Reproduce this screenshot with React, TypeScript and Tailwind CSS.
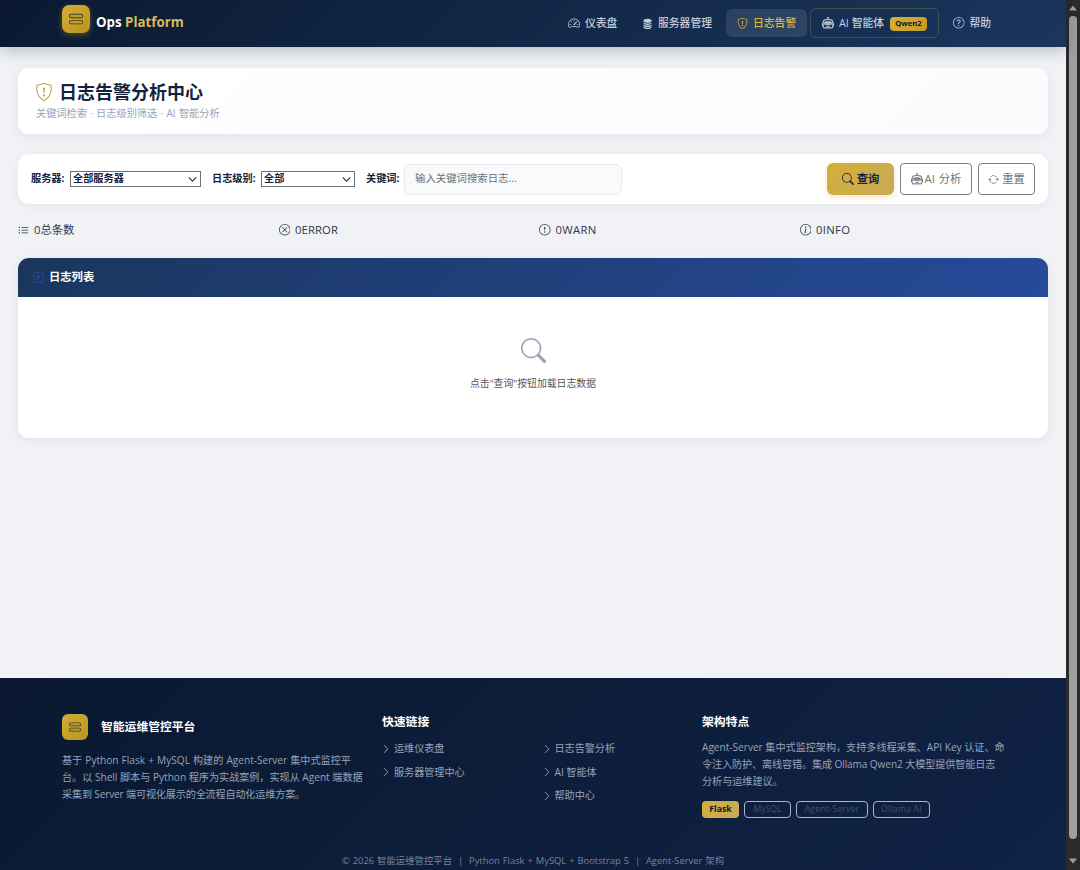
import React from "react";
import {
  BsHddStack,
  BsSpeedometer2,
  BsDatabaseFill,
  BsShieldExclamation,
  BsRobot,
  BsQuestionCircle,
  BsSearch,
  BsArrowRepeat,
  BsListUl,
  BsXCircle,
  BsExclamationCircle,
  BsInfoCircle,
  BsJournalText,
  BsChevronRight,
  BsChevronDown,
} from "react-icons/bs";

function Navbar() {
  return (
    <header className="relative z-10 flex h-[47px] shrink-0 items-start justify-between bg-[linear-gradient(135deg,#0a1931_0%,#1a365d_100%)] pl-[62px] pr-[63px] shadow-[0_3px_16px_rgba(10,25,49,0.28)]">
      <div className="flex items-start">
        <div className="mt-[5px] flex size-7 items-center justify-center rounded-[7px] bg-[linear-gradient(135deg,#d4af37,#b8941f)] shadow-[0_2px_6px_rgba(212,175,55,0.35)]">
          <BsHddStack className="size-[14px] text-[#0a1931]/75" />
        </div>
        <div className="ml-[6px] mt-[12px] whitespace-nowrap text-[13.3px] font-bold leading-[20px] text-white">
          Ops <span className="text-[#d6bb5c]">Platform</span>
        </div>
      </div>
      <nav className="flex h-[46px] items-center gap-[3px] text-[10.8px] font-medium text-[#c3cddd]">
        <a className="flex h-7 w-[71px] items-center gap-[5px] pl-[11px]">
          <BsSpeedometer2 className="size-3" />仪表盘
        </a>
        <a className="flex h-7 w-[92px] items-center gap-[5px] pl-[11px]">
          <BsDatabaseFill className="size-[11px]" />服务器管理
        </a>
        <a className="flex h-7 w-[81px] items-center gap-[5px] rounded-[6px] bg-white/10 pl-[11px] text-[#d8b63f]">
          <BsShieldExclamation className="size-[11px]" />日志告警
        </a>
        <a className="flex h-[30px] w-[129px] items-center rounded-[6px] border border-[#d4af37]/25 pl-[11px]">
          <BsRobot className="size-3 stroke-current stroke-[0.5]" />
          <span className="ml-[5px] w-[47px] whitespace-nowrap">AI 智能体</span>
          <span className="ml-[4px] mt-px flex h-[14px] w-[37px] items-center justify-center rounded-[4px] bg-[linear-gradient(135deg,#d9b035,#c19a23)] text-[7.6px] font-bold text-[#0a1931]">
            Qwen2
          </span>
        </a>
        <a className="flex h-7 w-[61px] items-center gap-[5px] pl-[11px]">
          <BsQuestionCircle className="size-[11.5px]" />帮助
        </a>
      </nav>
    </header>
  );
}

function SelectBox({ label, className }: { label: string; className: string }) {
  return (
    <div className={`flex h-4 items-center justify-between border border-[#6d7177] bg-white pl-[2px] pr-[3px] ${className}`}>
      <span>{label}</span>
      <BsChevronDown className="size-[9px] stroke-[#14233d] stroke-1" />
    </div>
  );
}

function FilterBar() {
  return (
    <section className="mt-5 flex h-[50px] items-center rounded-[11px] bg-white pl-[13px] pr-[13px] text-[10.2px] font-bold text-[#14233d] shadow-[0_2px_10px_rgba(10,25,49,0.05)]">
      <span className="w-[39px] whitespace-nowrap">服务器:</span>
      <SelectBox label="全部服务器" className="w-[131px]" />
      <span className="ml-[11px] w-[49px] whitespace-nowrap">日志级别:</span>
      <SelectBox label="全部" className="w-[94px]" />
      <span className="ml-[11px] w-[38px] whitespace-nowrap">关键词:</span>
      <div className="flex h-[31px] w-[218px] items-center rounded-[6px] border border-[#e6eaf0] bg-[#f8fafc] pl-[10px] text-[10.4px] font-normal text-[#6c7078]">
        输入关键词搜索日志...
      </div>
      <div className="mb-px ml-auto flex gap-[6px] text-[11.3px]">
        <button className="flex h-8 w-[67px] items-center justify-center gap-[3px] rounded-[6px] bg-[linear-gradient(135deg,#d4af37,#c9a959)] pt-px font-bold shadow-[0_2px_6px_rgba(212,175,55,0.3)]">
          <BsSearch className="size-[12px]" />查询
        </button>
        <button className="flex h-8 w-[72px] items-center justify-center gap-[2px] whitespace-nowrap rounded-[4px] border border-[#7a8088] pt-px font-normal text-[#6c757d] [word-spacing:1px]">
          <BsRobot className="size-[12px] stroke-current stroke-[0.3]" />AI 分析
        </button>
        <button className="flex h-8 w-[57px] items-center justify-center gap-[3px] rounded-[4px] border border-[#7a8088] pt-px font-normal text-[#6c757d]">
          <BsArrowRepeat className="size-[11px]" />重置
        </button>
      </div>
    </section>
  );
}

function Stats() {
  return (
    <section className="mt-[15px] flex h-[22px] items-center text-[11.3px] text-[#2d3748]">
      <div className="flex w-[260.5px] items-center gap-[5px]"><BsListUl className="size-[11px]" />0总条数</div>
      <div className="flex w-[260.5px] items-center gap-[5px] tracking-[0.1px]"><BsXCircle className="size-[11.5px]" />0ERROR</div>
      <div className="flex w-[260.5px] items-center gap-[5px] tracking-[0.3px]"><BsExclamationCircle className="size-[11.5px]" />0WARN</div>
      <div className="flex items-center gap-[5px] tracking-[0.3px]"><BsInfoCircle className="size-[11.5px]" />0INFO</div>
    </section>
  );
}

function LogPanel() {
  return (
    <section className="mt-[17px] flex h-[180px] flex-col overflow-hidden rounded-[11px] bg-white shadow-[0_2px_10px_rgba(10,25,49,0.07)]">
      <div className="flex h-[39px] items-center bg-[linear-gradient(135deg,#1a365d_0%,#264a9a_100%)] pl-[15px] text-[11.3px] font-bold text-white">
        <BsJournalText className="mr-[5px] size-[11px] text-[#2c5299]" />日志列表
      </div>
      <div className="flex flex-col items-center">
        <BsSearch className="mt-[41px] size-[25px] text-[#98a3b8]" />
        <p className="mt-[12px] text-[9.85px] leading-[16px] text-[#555]">点击"查询"按钮加载日志数据</p>
      </div>
    </section>
  );
}

function FooterLink({ children }: { children: React.ReactNode }) {
  return (
    <a className="flex h-[23.6px] items-center gap-[3px] whitespace-nowrap">
      <BsChevronRight className="size-[10px]" />
      {children}
    </a>
  );
}

function Footer() {
  return (
    <footer className="flex h-[192px] shrink-0 flex-col bg-[linear-gradient(135deg,#0a1931_0%,#102245_100%)] pl-[62px] text-[10.1px] text-[#97a3b8]">
      <div className="flex h-[174px]">
        <div className="w-[320px] pt-[36px]">
          <div className="flex items-center gap-[13px] text-[11.8px] font-bold text-white">
            <span className="flex size-[26px] items-center justify-center rounded-[6px] bg-[linear-gradient(135deg,#d4af37,#b8941f)]">
              <BsHddStack className="size-[12px] text-[#0a1931]/75" />
            </span>
            智能运维管控平台
          </div>
          <p className="mt-[12px] whitespace-nowrap leading-[17px]">
            <span className="[word-spacing:0.5px]">基于 Python Flask + MySQL 构建的 Agent-Server 集中式监控平</span><br />
            台。以 Shell 脚本与 Python 程序为实战案例，实现从 Agent 端数据<br />
            <span className="tracking-[-0.15px]">采集到 Server 端可视化展示的全流程自动化运维方案。</span>
          </p>
        </div>
        <div className="w-[320px] pt-[34px]">
          <h3 className="text-[11.8px] font-bold leading-[18px] text-white">快速链接</h3>
          <div className="-ml-px mt-[7px] flex">
            <div className="w-[160.5px]">
              <FooterLink>运维仪表盘</FooterLink>
              <FooterLink>服务器管理中心</FooterLink>
            </div>
            <div>
              <FooterLink>日志告警分析</FooterLink>
              <FooterLink>AI 智能体</FooterLink>
              <FooterLink>帮助中心</FooterLink>
            </div>
          </div>
        </div>
        <div className="pt-[34px]">
          <h3 className="text-[11.8px] font-bold leading-[18px] text-white">架构特点</h3>
          <p className="mt-[9px] whitespace-nowrap leading-[17px]">
            Agent-Server 集中式监控架构，支持多线程采集、API Key 认证、命<br />
            <span className="tracking-[-0.1px]">令注入防护、离线容错。集成 Ollama Qwen2 大模型提供智能日志</span><br />
            分析与运维建议。
          </p>
          <div className="mt-[11px] flex gap-[5px] text-[8.7px] text-[#41506b]">
            <span className="flex h-[17px] w-[37px] items-center justify-center rounded-[4px] bg-[linear-gradient(135deg,#d4af37,#c9a959)] font-bold text-[#0a1931]">Flask</span>
            <span className="flex h-[17px] w-[47px] items-center justify-center rounded-[4px] border border-[#a9b8d0]">MySQL</span>
            <span className="flex h-[17px] w-[72px] items-center justify-center whitespace-nowrap rounded-[4px] border border-[#a9b8d0] tracking-[0.2px]">Agent-Server</span>
            <span className="flex h-[17px] w-[57px] items-center justify-center whitespace-nowrap rounded-[4px] border border-[#a9b8d0] tracking-[0.2px]">Ollama AI</span>
          </div>
        </div>
      </div>
      <p className="-ml-[62px] whitespace-pre pt-px text-center text-[9.4px] leading-[18px] text-[#76849b] [word-spacing:0.5px]">
        © 2026 智能运维管控平台  |  Python Flask + MySQL + Bootstrap 5  |  Agent-Server 架构
      </p>
    </footer>
  );
}

function Scrollbar() {
  return (
    <div className="flex h-full w-[14px] shrink-0 flex-col items-center bg-[#2b2b2b]">
      <svg className="mt-[4px] size-[8px]" viewBox="0 0 8 8"><path d="M4 1.5 8 6.5H0Z" fill="#a0a0a0" /></svg>
      <div className="mt-[4px] h-[823px] w-[8px] rounded-full bg-[#9f9f9f]" />
      <svg className="mt-[18px] size-[8px]" viewBox="0 0 8 8"><path d="M4 6.5 8 1.5H0Z" fill="#a0a0a0" /></svg>
    </div>
  );
}

export default function App() {
  return (
    <div className="flex h-[870px] w-[1080px] overflow-hidden font-['Open_Sans','Noto_Sans_CJK_SC',sans-serif]">
      <div className="flex w-[1066px] shrink-0 flex-col bg-[#f0f2f6]">
        <Navbar />
        <main className="flex-1 px-[18px] pt-[21px]">
          <section className="h-[66px] rounded-[11px] bg-[linear-gradient(135deg,#ffffff,#fafbfd)] pl-[18px] pt-[11px] shadow-[0_3px_14px_rgba(10,25,49,0.06)]">
            <h1 className="-ml-px flex items-center gap-[6px] text-[18px] font-bold leading-[26px] text-[#14233d]">
              <BsShieldExclamation className="size-[18px] text-[#c9a959]" />日志告警分析中心
            </h1>
            <p className="text-[10.2px] leading-[17px] text-[#9aa5b8] [word-spacing:0.6px]">关键词检索 · 日志级别筛选 · AI 智能分析</p>
          </section>
          <FilterBar />
          <Stats />
          <LogPanel />
        </main>
        <Footer />
      </div>
      <Scrollbar />
    </div>
  );
}
